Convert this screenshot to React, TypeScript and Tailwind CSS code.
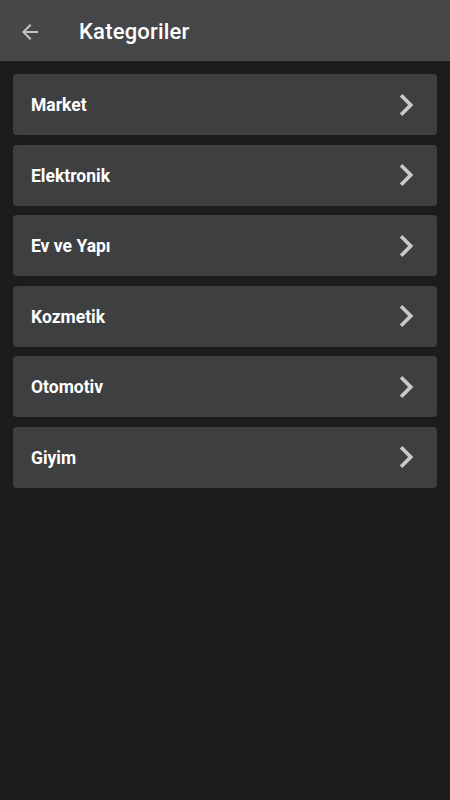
const categories = ["Market", "Elektronik", "Ev ve Yapı", "Kozmetik", "Otomotiv", "Giyim"];

function ChevronRight() {
  return (
    <svg width="44" height="44" viewBox="0 0 24 24" fill="#c9c9ca">
      <path d="M10 6L8.59 7.41 13.17 12l-4.58 4.59L10 18l6-6z" />
    </svg>
  );
}

export default function App() {
  return (
    <div className="min-h-[800px] w-full bg-[#1b1c1e]" style={{ fontFamily: "Roboto, 'Noto Sans', sans-serif" }}>
      <header className="flex h-[61px] items-center bg-[#464749]">
        <button className="ml-[18px] mt-[2px] flex h-6 w-6 items-center justify-center">
          <svg width="24" height="24" viewBox="0 0 24 24" fill="#c4c4c5">
            <path d="M20 11H7.83l5.59-5.59L12 4l-8 8 8 8 1.41-1.41L7.83 13H20v-2z" />
          </svg>
        </button>
        <h1 className="ml-[37px] mt-[1px] text-[22px] font-medium tracking-[0.2px] text-white">Kategoriler</h1>
      </header>
      <div className="flex flex-col gap-[9.5px] px-[13px] pt-[13px]">
        {categories.map((c) => (
          <div
            key={c}
            className="flex h-[61px] items-center justify-between rounded-[4px] bg-[#3e3f41] pl-[18px] pr-[9px]"
          >
            <span className="mt-[2px] text-[17.5px] font-bold text-white">{c}</span>
            <ChevronRight />
          </div>
        ))}
      </div>
    </div>
  );
}
